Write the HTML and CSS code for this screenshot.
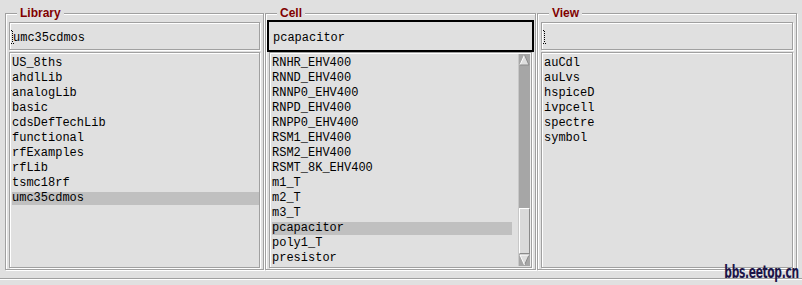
FILE: index.html
```html
<!DOCTYPE html>
<html lang="en">
<head>
  <meta charset="UTF-8" />
  <title>Library Browser</title>
  <link rel="stylesheet" href="styles.css">
</head>
<body>

<div class="dialog">

  <!-- Library -->
  <fieldset class="group group-lib">
    <legend>Library</legend>
    <div class="entry">
      <div class="field"><svg class="caret" width="3" height="14" viewBox="0 0 3 14"><path d="M0 0.5h2M1.5 1v12" stroke="#000" stroke-dasharray="1 1"/><path d="M0 13.5h3" stroke="#000" stroke-dasharray="1 1"/></svg>umc35cdmos</div>
    </div>
    <div class="list">
      <div class="items">
        <div class="item">US_8ths</div>
        <div class="item">ahdlLib</div>
        <div class="item">analogLib</div>
        <div class="item">basic</div>
        <div class="item">cdsDefTechLib</div>
        <div class="item">functional</div>
        <div class="item">rfExamples</div>
        <div class="item">rfLib</div>
        <div class="item">tsmc18rf</div>
        <div class="item selected">umc35cdmos</div>
      </div>
    </div>
  </fieldset>

  <!-- Cell -->
  <fieldset class="group group-cell">
    <legend>Cell</legend>
    <div class="entry focus">
      <div class="field">pcapacitor</div>
    </div>
    <div class="list">
      <div class="items">
        <div class="item">RNHR_EHV400</div>
        <div class="item">RNND_EHV400</div>
        <div class="item">RNNP0_EHV400</div>
        <div class="item">RNPD_EHV400</div>
        <div class="item">RNPP0_EHV400</div>
        <div class="item">RSM1_EHV400</div>
        <div class="item">RSM2_EHV400</div>
        <div class="item">RSMT_8K_EHV400</div>
        <div class="item">m1_T</div>
        <div class="item">m2_T</div>
        <div class="item">m3_T</div>
        <div class="item selected">pcapacitor</div>
        <div class="item">poly1_T</div>
        <div class="item">presistor</div>
      </div>
      <div class="scrollbar">
        <svg class="arrow" width="11" height="12" viewBox="0 0 11 12">
          <polygon points="5.5,1 10,11 1,11" fill="#dedede"/>
          <path d="M5.5 1L1 11" stroke="#fff"/>
          <path d="M5.5 1L10 11H1" stroke="#8a8a8a" fill="none"/>
        </svg>
        <div class="trough"><div class="thumb"></div></div>
        <svg class="arrow" width="11" height="12" viewBox="0 0 11 12">
          <polygon points="1,1 10,1 5.5,11" fill="#dedede"/>
          <path d="M10 1L5.5 11" stroke="#8a8a8a"/>
          <path d="M5.5 11L1 1H10" stroke="#fff" fill="none"/>
        </svg>
      </div>
    </div>
  </fieldset>

  <!-- View -->
  <fieldset class="group group-view">
    <legend>View</legend>
    <div class="entry">
      <div class="field"><svg class="caret" width="3" height="14" viewBox="0 0 3 14"><path d="M0 0.5h2M1.5 1v12" stroke="#000" stroke-dasharray="1 1"/><path d="M0 13.5h3" stroke="#000" stroke-dasharray="1 1"/></svg></div>
    </div>
    <div class="list">
      <div class="items">
        <div class="item">auCdl</div>
        <div class="item">auLvs</div>
        <div class="item">hspiceD</div>
        <div class="item">ivpcell</div>
        <div class="item">spectre</div>
        <div class="item">symbol</div>
      </div>
    </div>
  </fieldset>

</div>

<div class="footer"></div>

<div class="watermark">bbs.eetop.cn</div>

</body>
</html>
```

FILE: styles.css
```css
:root {
  --bg-color: #e0e0e0;
  --line-color: #a0a0a0;
  --title-color: #800000;
  --select-color: #c0c0c0;
}

body {
  margin: 0;
  width: 802px;
  height: 285px;
  position: relative;
  overflow: hidden;
  background: var(--bg-color);
  color: #000;
  font-family: "Liberation Mono", "Courier New", monospace;
  font-size: 12px;
}

.dialog {
  display: flex;
  gap: 1px;
  padding: 6px 5px 0 5px;
}

.group {
  box-sizing: border-box;
  margin: 0;
  padding: 0 1px 1px 1px;
  min-width: 0;
  border: 1px solid var(--line-color);
  box-shadow: inset 1px 1px 0 #fff, 1px 1px 0 #fff;
}

.group-lib {
  width: 259px;
}

.group-cell {
  width: 271px;
}

.group-view {
  width: 260px;
}

.group legend {
  margin-left: 10px;
  padding: 0 3px;
  background: var(--bg-color);
  color: var(--title-color);
  font-family: "Liberation Sans", Arial, sans-serif;
  font-weight: bold;
  font-size: 12px;
  line-height: 14px;
}

.entry {
  border: 2px solid transparent;
}

.entry.focus {
  border-color: #000;
}

.field {
  box-sizing: border-box;
  height: 28px;
  padding: 2px 0 0 3px;
  border: 1px solid var(--line-color);
  box-shadow: inset 1px 1px 0 #fff, 1px 1px 0 #fff;
  line-height: 26px;
  white-space: pre;
  overflow: hidden;
}

.entry.focus .field {
  border-color: var(--bg-color);
  box-shadow: none;
}

.caret {
  display: inline-block;
  vertical-align: -3px;
  margin-left: -2px;
  margin-right: -1px;
}

.list {
  display: flex;
  box-sizing: border-box;
  height: 216px;
  margin: 0 2px;
  padding: 2px 0 0 1px;
  border: 1px solid var(--line-color);
  box-shadow: inset 1px 1px 0 #fff, 1px 1px 0 #fff;
}

.items {
  flex: 1;
}

.item {
  height: 13px;
  padding: 2px 0 0 1px;
  line-height: 13px;
  white-space: pre;
  background-clip: content-box;
}

.item.selected {
  background-color: var(--select-color);
}

.group-cell .items {
  margin-right: 6px;
}

.scrollbar {
  display: flex;
  flex-direction: column;
  width: 13px;
  box-sizing: border-box;
  margin: -1px 0 1px 0;
  background: #a6a6a6;
  border-left: 1px solid #c8c8c8;
  border-right: 1px solid #f0f0f0;
}

.arrow {
  display: block;
}

.trough {
  flex: 1;
  display: flex;
  flex-direction: column;
}

.thumb {
  margin-top: auto;
  height: 44px;
  background: #dadada;
  border-top: 1px solid #fff;
  border-left: 1px solid #fff;
  border-bottom: 1px solid #8a8a8a;
  border-right: 1px solid #8a8a8a;
}

.footer {
  margin-top: 8px;
  height: 7px;
  border-top: 1px solid var(--line-color);
  box-shadow: inset 0 1px 0 #fff;
}

.watermark {
  position: absolute;
  right: 3px;
  bottom: 4px;
  color: #1c1448;
  font-family: "DejaVu Sans Condensed", "DejaVu Sans", sans-serif;
  font-weight: bold;
  font-size: 18px;
  line-height: 18px;
  letter-spacing: -0.5px;
  transform: scaleX(0.66);
  transform-origin: right bottom;
}
```
